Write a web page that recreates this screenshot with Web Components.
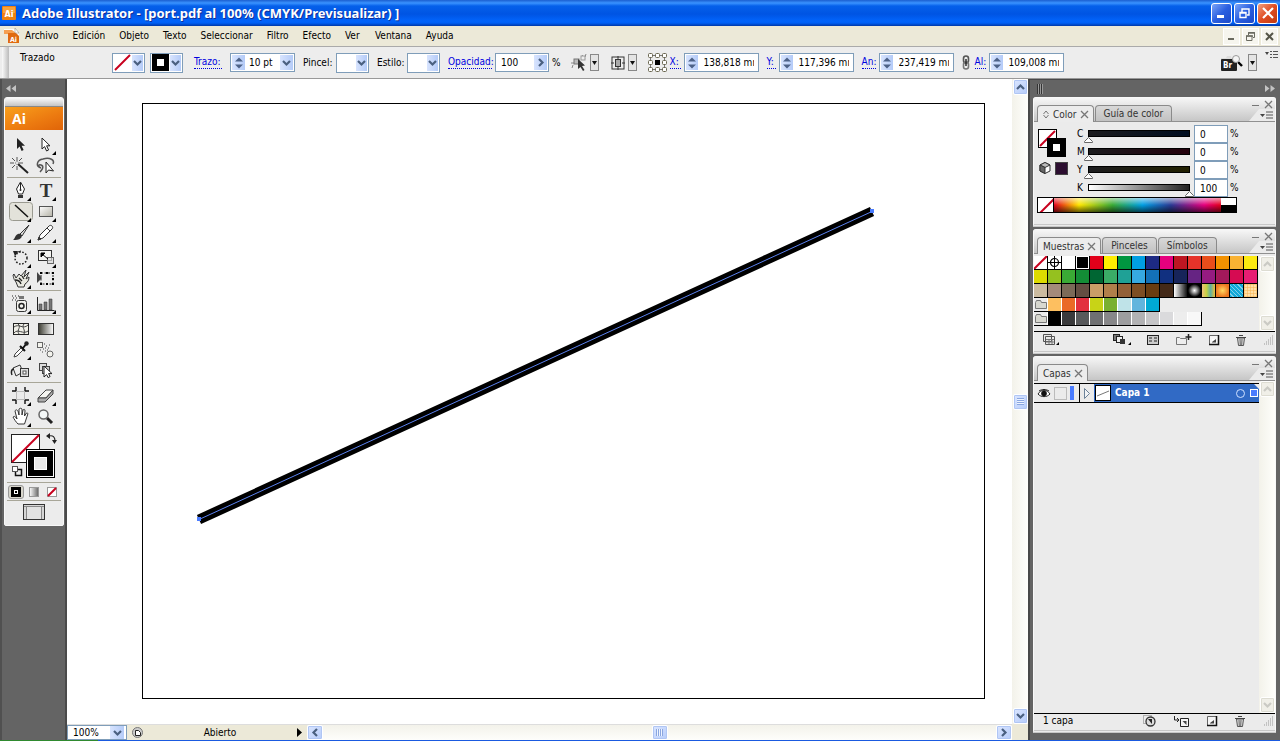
<!DOCTYPE html>
<html lang="es">
<head>
<meta charset="utf-8">
<title>Adobe Illustrator - [port.pdf]</title>
<style>
html,body{margin:0;height:100%}
body{font:10px/14px "DejaVu Sans Condensed","DejaVu Sans",sans-serif;color:#000;overflow:hidden;background:#646464}
</style>
</head>
<body>
<ai-app></ai-app>
<script>
const BASE = `*{box-sizing:border-box}
button,input{font:inherit;color:inherit;margin:0;padding:0;border:0;background:none;outline:0;border-radius:0;min-width:0}
button{display:flex;align-items:center;justify-content:center}
svg{display:block;overflow:visible}`;
function define(name, css, html, after) {
  const t = document.createElement('template');
  customElements.define(name, class extends HTMLElement {
    connectedCallback() {
      if (this.shadowRoot) return;
      t.innerHTML = `<style>${BASE}${css}</style>${typeof html === 'function' ? html(this) : html}`;
      this.attachShadow({mode: 'open'}).append(t.content.cloneNode(true));
      if (after) after(this);
    }
  });
}

/* Icons: name -> [width, height, markup] */
const corner = '<path d="M23 17v4h-4z" fill="#000"/>';
const arrow = 'M0 0v11l2.600-2.400 2 4.400 2-1-2-4.200h3.400z';
const ICONS = {
  ai: [14,14,'<rect width="14" height="14" rx="1" fill="#f08010"/><rect x="1" y="1" width="12" height="6" fill="#f9a23c"/><text x="7" y="11" text-anchor="middle" font-size="9" font-weight="bold" fill="#fff">Ai</text>'],
  aidoc: [16,16,'<path d="M0 1h10l5 5v9H4V6H0z" fill="#fff"/><path d="M0 2h8l4 3v3H4V6H0z" fill="#f5a050"/><path d="M4 5h8l3 3v7H4z" fill="#e06a10"/><path d="M11 0l4 5h-4z" fill="#fff" stroke="#888" stroke-width=".5"/><text x="9.500" y="13.500" text-anchor="middle" font-size="7" font-weight="bold" fill="#fff">Ai</text>'],
  chev: [7,6,'<path d="M0 1l3.500 3.500L7 1" fill="none" stroke="#4a6080" stroke-width="2.200"/>'],
  chevup: [7,6,'<path d="M0 5l3.500-3.500L7 5" fill="none" stroke="#4a6080" stroke-width="2.200"/>'],
  chevr: [6,7,'<path d="M1 0l3.500 3.500L1 7" fill="none" stroke="#4a6080" stroke-width="2.200"/>'],
  chevl: [6,7,'<path d="M5 0L1.500 3.500 5 7" fill="none" stroke="#4a6080" stroke-width="2.200"/>'],
  spin: [8,12,'<path d="M0 4.500L4 .5l4 4zM0 7.500l4 4 4-4z" fill="#4d6288"/>'],
  tri: [5,4,'<path d="M0 0h5L2.500 4z" fill="#111"/>'],
  none: [17,17,'<rect width="17" height="17" fill="#fff"/><path d="M1 16L16 1" stroke="#c8001e" stroke-width="2"/>'],
  strokesw: [17,17,'<rect width="17" height="17" fill="#000"/><rect x="5" y="5" width="7" height="7" fill="#fff"/>'],
  wmin: [10,10,'<rect x="0" y="7" width="7" height="3" fill="#fff"/>'],
  wres: [11,11,'<path d="M3 4V1h7v6H8M1 4.500h6v5H1z M1 5h6" fill="none" stroke="#fff" stroke-width="1.400"/>'],
  wclose: [10,10,'<path d="M0 0l10 10M10 0L0 10" stroke="#fff" stroke-width="2.200"/>'],
  dmin: [9,9,'<rect x="1" y="6" width="6" height="2" fill="#6b6b60"/>'],
  dres: [9,9,'<path d="M2.500 3V.5h6v5H7M.5 4h5.500v4.500H.5z" fill="none" stroke="#6b6b60"/><path d="M2 1h7M0 4h7" stroke="#6b6b60" stroke-width="1.500"/>'],
  dclose: [9,9,'<path d="M1 1l7 7M8 1L1 8" stroke="#555548" stroke-width="2"/>'],
  similar: [17,17,'<path d="M0 9h4M11 1l3 4M15 0l-1 3M2 11l-1 3" stroke="#888"/><rect x="3" y="5" width="5" height="5" fill="#bbb" stroke="#777"/><rect x="10" y="2" width="4" height="4" fill="#eee" stroke="#999"/><path d="M7 5v10l2.500-2 2.500 4 1.500-1-2.500-4 3-.5z" fill="#333"/>'],
  align: [14,14,'<rect x="1" y="1" width="12" height="12" fill="none" stroke="#333"/><path d="M0 7h3M11 7h3M7 0v3M7 11v3" stroke="#333"/><rect x="4.500" y="3.500" width="5" height="7" fill="#aaa" stroke="#333"/>'],
  refpt: [19,19,(()=>{let s='<path d="M2.500 2.500h14v14h-14z" fill="none" stroke="#777"/><rect x="7" y="7" width="5" height="5" fill="#000"/>';for(const y of[0,7,14])for(const x of[0,7,14])if(x!==7||y!==7)s+=`<rect x="${x+.5}" y="${y+.5}" width="4" height="4" rx="1" fill="#fff" stroke="#6a6650"/>`;return s})()],
  link: [8,15,'<rect x="1.500" y="1" width="5" height="7" rx="2.500" fill="none" stroke="#555" stroke-width="1.600"/><rect x="1.500" y="7" width="5" height="7" rx="2.500" fill="none" stroke="#777" stroke-width="1.600"/><path d="M4 4v7" stroke="#222" stroke-width="1.400"/>'],
  bridge: [22,16,'<path d="M0 3h5l1-2h4l1 3h4v11H0z" fill="#ddd"/><rect y="4" width="16" height="12" rx="1" fill="#222"/><text x="2" y="13" font-size="8" font-weight="bold" fill="#fff">Br</text><path d="M17 7l4 4" stroke="#000" stroke-width="2.400"/><circle cx="15" cy="4" r="3.500" fill="#f4f4f4" stroke="#999"/>'],
  pmenu: [13,9,'<path d="M0 3h5L2.500 6z" fill="#444"/><path d="M6 1h7M6 4h7M6 7h7" stroke="#555"/>'],
  cmenu: [13,9,'<path d="M0 2h4L2 5z" fill="#444"/><path d="M8 1.500h5M8 4.500h5M8 7.500h5" stroke="#555"/><path d="M5 1.500h2M5 4.500h2M5 7.500h2" stroke="#555"/>'],
  ff: [10,7,'<path d="M0 0l4.500 3.500L0 7zM5.500 0L10 3.500 5.500 7z" fill="#c4c4c4"/>'],
  rw: [10,7,'<path d="M4.500 0L0 3.500 4.500 7zM10 0L5.500 3.500 10 7z" fill="#c4c4c4"/>'],
  x: [7,7,'<path d="M0 0l7 7M7 0L0 7" stroke="#777" stroke-width="1.300"/>'],
  dash: [7,7,'<path d="M0 4.500h7" stroke="#777"/>'],
  updown: [6,9,'<path d="M.5 4L3 1l2.500 3M.5 5L3 8l2.500-3" fill="none" stroke="#777"/>'],
  t_sel: [25,21,`<path d="${arrow}" transform="translate(9 4)" fill="#222"/>`],
  t_dir: [25,21,`<path d="${arrow}" transform="translate(9 4)" fill="#fff" stroke="#222"/>${corner}`],
  t_wand: [25,21,'<path d="M10 9l10 9" stroke="#222" stroke-width="2"/><path d="M9 2v4M9 11v4M2 8h4M11 8h4M4 3l3 3M14 3l-3 3M4 13l3-3" stroke="#555"/><circle cx="9" cy="8" r="1.500" fill="#fff" stroke="#555" stroke-width=".5"/>'],
  t_lasso: [25,21,'<path d="M8 13C2 11 4 5 10 4c7-2 12 1 10 5M8 13c-3-1-3-4 0-3s2 4-1 7" fill="none" stroke="#555" stroke-width="1.500"/><path d="M13 7v11l2.500-3 5 1z" fill="#fff" stroke="#222"/>'],
  t_pen: [25,21,'<path d="M12.500 2l4 7-2 5h-4l-2-5z" fill="#fff" stroke="#222"/><path d="M12.500 3v6" stroke="#222"/><circle cx="12.500" cy="10" r="1" fill="#222"/><rect x="10" y="15" width="5" height="3" fill="#333"/>'+corner],
  t_type: [25,21,'<text x="13" y="17" text-anchor="middle" font-family="Liberation Serif,serif" font-weight="bold" font-size="19" fill="#333">T</text>'+corner],
  t_line: [25,21,'<rect x="1.500" y="1.500" width="23" height="18" rx="3" fill="#e3e2da" stroke="#9a9a90"/><path d="M7 4l13 12" stroke="#111" stroke-width="1.500"/>'+corner],
  t_rect: [25,21,'<defs><linearGradient id="rg" x2="1" y2="1"><stop offset="0" stop-color="#fff"/><stop offset="1" stop-color="#b4b2a6"/></linearGradient></defs><rect x="6.500" y="5.500" width="13" height="10" fill="url(#rg)" stroke="#555"/>'+corner],
  t_brush: [25,21,'<path d="M21 3l-9 9 2 2z" fill="#ddd" stroke="#333"/><path d="M5 18c2-1 2-5 5-6 3-1 5 2 3 4-2 2-5 2-8 2z" fill="#333"/>'+corner],
  t_pencil: [25,21,'<path d="M5 18l2-5 9-9c2-2 5 1 3 3l-9 9z" fill="#fff" stroke="#333"/><path d="M5 18l1-3 2 2zM14 6l3 3" stroke="#333" fill="#333"/>'+corner],
  t_rot: [25,21,'<circle cx="13" cy="11" r="6" fill="none" stroke="#222" stroke-width="1.500" stroke-dasharray="1.600 1.600"/><path d="M7 8a7 7 0 0 1 6-4" fill="none" stroke="#222"/><path d="M5 4h5L7 9z" fill="#222"/>'+corner],
  t_scale: [25,21,'<rect x="5.500" y="3.500" width="13" height="10" fill="#f4f4f0" stroke="#333"/><rect x="14.500" y="10.500" width="6" height="6" fill="#ddd" fill-opacity=".7" stroke="#666"/><path d="M8 6h4l-4 4zM9 7l6 5" fill="#000" stroke="#000"/>'+corner],
  t_warp: [25,21,'<path d="M5 7c1 5 1 4 3 7l2 5h6l1-3c3-2 4-4 4-7l-3 2 3-7-5 5 2-7-5 6-2-2-3 4-2-4z" fill="#e8e8e0" stroke="#333"/><path d="M7 12c3 0 5 1 6 4M11 10l3 3M14 8l2 3" fill="none" stroke="#222" stroke-width="1.300"/>'+corner],
  t_free: [25,21,'<rect x="8" y="5" width="12" height="11" fill="none" stroke="#222" stroke-dasharray="2 1.500"/><path d="M4 4v11l5-5z" fill="#444"/><path d="M7 4h2v2H7zM19 4h2v2h-2zM19 15h2v2h-2zM7 15h2v2H7zM13 4h2v2h-2zM13 15h2v2h-2zM19 10h2v2h-2z" fill="#000"/>'],
  t_spray: [25,21,'<path d="M4 3h1M7 3h1M10 3h1M5 5h1M8 5h1M4 7h1M7 7h1" stroke="#222"/><rect x="11" y="3" width="5" height="3" fill="#777"/><rect x="8.500" y="7.500" width="10" height="11" rx="2" fill="#f2f2ee" stroke="#333"/><circle cx="13.500" cy="13" r="2.500" fill="none" stroke="#222" stroke-width="1.500"/>'+corner],
  t_graph: [25,21,'<path d="M4.500 4v13.500h17" fill="none" stroke="#222"/><path d="M6 11h3v6H6zM11 9h3v8h-3zM16 6h3v11h-3z" fill="#777" stroke="#333" stroke-width=".5"/>'+corner],
  t_mesh: [25,21,'<rect x="5.500" y="5.500" width="15" height="11" fill="#f1f0e8" stroke="#222"/><path d="M6 9c5-4 9 3 14-2M6 15c4-5 9 2 14-2M10 6c4 3-2 6 1 10M16 6c-3 3 2 6 0 10" fill="none" stroke="#444"/>'],
  t_grad: [25,21,'<defs><linearGradient id="tg"><stop offset="0" stop-color="#3a3a30"/><stop offset="1" stop-color="#fff"/></linearGradient></defs><rect x="5.500" y="5.500" width="15" height="11" fill="url(#tg)" stroke="#333"/>'],
  t_eye: [25,21,'<path d="M6 18l1-3 7-7 2 2-7 7z" fill="#fff" stroke="#444"/><path d="M12 7l5 5M15 9l4-5" stroke="#111" stroke-width="2"/><circle cx="18.500" cy="4.500" r="2.200" fill="#222"/>'+corner],
  t_blend: [25,21,'<rect x="4.500" y="3.500" width="5" height="5" fill="#f4f4ee" stroke="#666"/><circle cx="17" cy="15" r="3" fill="#f4f4ee" stroke="#666"/><path d="M11 5h1M13 7h1M10 10h1M12 12h1M7 11h1M9 13h1M15 9h1M12 9h1M14 11h1M16 6h1" stroke="#444"/>'],
  t_bucket: [25,21,'<path d="M5 8l7-3 3 7-7 4z" fill="#eee" stroke="#333"/><path d="M6 9c-3 0-3 4-2 6" fill="none" stroke="#222" stroke-width="1.500"/><rect x="12.500" y="8.500" width="8" height="8" fill="#ddd" stroke="#333"/><rect x="15" y="11" width="3" height="3" fill="#fff" stroke="#555"/>'],
  t_live: [25,21,'<rect x="6.500" y="3.500" width="7" height="7" fill="#ddd" stroke="#444"/><rect x="9.500" y="6.500" width="7" height="7" fill="#ccc" stroke="#444"/><path d="M11 6v11l2.600-2.400 1.500 3 2-1-1.500-3h3.400z" fill="#fff" stroke="#222"/>'],
  t_slice: [25,21,'<path d="M8 2v4M17 2v4M8 15v4M17 15v4M4 6h4M17 6h4M4 15h4M17 15h4" stroke="#111" stroke-width="1.400"/><rect x="8.500" y="6.500" width="8" height="8" fill="none" stroke="#888" stroke-dasharray="1 1"/>'+corner],
  t_erase: [25,21,'<path d="M5 13l8-8h7l-7 8z" fill="#f4f4f0" stroke="#444"/><path d="M5 13v4h7l8-8V5l-7 8z" fill="#aaa" stroke="#444"/>'+corner],
  t_hand: [25,21,'<path d="M10 18c-2-2-4-5-5-7 1-1 2-1 4 2L7 5c1-2 2-1 3 0l1 4V3c1-1 2-1 3 0v6l1-5c1-1 2-1 2 1l-.5 5 2-3c1 0 2 0 1 2l-2 6-1 3z" fill="#fff" stroke="#333"/>'+corner],
  t_zoom: [25,21,'<path d="M14 12l5 5" stroke="#222" stroke-width="3"/><circle cx="10.500" cy="8.500" r="4.500" fill="#f4f8f8" stroke="#666" stroke-width="1.500"/>'],
  swap: [11,11,'<path d="M3 3c4-1 6 1 6 5" fill="none" stroke="#222" stroke-width="1.200"/><path d="M0 3l4-3v6zM6 7h5L8.500 11z" fill="#222"/>'],
  deflt: [10,10,'<rect x="3.500" y="3.500" width="6" height="6" fill="none" stroke="#111" stroke-width="1.500"/><rect x=".5" y=".5" width="5" height="5" fill="#fff" stroke="#555"/>'],
  m_color: [10,10,'<rect width="10" height="10" fill="#000"/><rect x="3.500" y="3.500" width="3" height="3" fill="none" stroke="#fff"/>'],
  m_grad: [10,10,'<defs><linearGradient id="mg"><stop offset="0" stop-color="#fff"/><stop offset="1" stop-color="#666"/></linearGradient></defs><rect x=".5" y=".5" width="9" height="9" fill="url(#mg)" stroke="#999"/>'],
  m_none: [10,10,'<rect x=".5" y=".5" width="9" height="9" fill="#fff" stroke="#999"/><path d="M1 9l8-8" stroke="#c8001e" stroke-width="2"/>'],
  screen: [22,16,'<rect x=".5" y=".5" width="21" height="15" fill="#d6d6d6" stroke="#333"/><path d="M1 2.500h20M3.500 3v12M18.500 3v12" stroke="#888"/><rect x="4" y="3" width="14" height="12" fill="#e2e2e2"/>'],
  cube: [12,12,'<path d="M6 .5L11 3v6l-5 2.500L1 9V3z" fill="#fff" stroke="#333"/><path d="M6 .5L11 3 6 5.500 1 3z" fill="#bbb" stroke="#333"/><path d="M1 3l5 2.500v6L1 9z" fill="#666" stroke="#333"/>'],
  folder: [12,11,'<path d="M.5 3.500l1-2h4l1 2h5v6H.5z" fill="#d8d8d0" stroke="#777"/>'],
  reg: [13,13,'<rect width="13" height="13" fill="#fff"/><circle cx="6.500" cy="6.500" r="4" fill="none" stroke="#000" stroke-width="1.200"/><path d="M0 6.500h13M6.500 0v13" stroke="#000"/>'],
  s_lib: [16,14,'<path d="M1.500 1.500h8v7h-8zM3.500 3.500h9v8h-9z" fill="#e8e8e8" stroke="#555"/><path d="M4 6.500h8M4 9h8M7 6v5M10 6v5" stroke="#777"/><path d="M17 9v3h-3z"/>'],
  s_kind: [17,14,'<rect x=".5" y="1.500" width="6" height="6" fill="#777" stroke="#222"/><rect x="3.500" y="3.500" width="6" height="6" fill="#eee" stroke="#222"/><rect x="7" y="6" width="5" height="5" fill="#333"/><path d="M18 9v3h-3z"/>'],
  s_opt: [12,10,'<rect x=".5" y=".5" width="11" height="9" fill="#ccc" stroke="#222"/><path d="M2 3h3M7 3h3M2 6h3M7 6h3" stroke="#222"/>'],
  s_fold: [16,12,'<path d="M.5 3.500h3l1 1h6v6H.5z" fill="#eee" stroke="#777"/><path d="M12.500 0v6M9.500 3h6" stroke="#222" stroke-width="1.500"/>'],
  s_new: [10,10,'<path d="M.5 .5h9v9h-9z" fill="#f4f4f4" stroke="#666"/><path d="M9.500 0v9.500H0" fill="none" stroke="#111" stroke-width="1.500"/><path d="M3 4v3.500h4V4z" fill="#444"/><path d="M3 4h4L3 7z" fill="#fff"/>'],
  s_del: [10,12,'<path d="M1.500 4h7l-1 7.500h-5z" fill="#ddd" stroke="#555"/><path d="M4 5l.3 6M6 5l-.3 6" stroke="#666"/><path d="M0 3.500h10M3 1.500h4" stroke="#444"/>'],
  l_mask: [13,12,'<rect x=".5" y=".5" width="8" height="8" fill="none" stroke="#777" stroke-dasharray="1 1"/><circle cx="7.500" cy="6.500" r="4.500" fill="#ddd" stroke="#333" stroke-width="1.300"/><path d="M5 4h4v5z" fill="#222"/>'],
  l_sub: [15,11,'<path d="M.5 0v4H4M3 2l2 2-2 2" fill="none" stroke="#222"/><path d="M6.500 2.500h8v8h-8z" fill="#f4f4f4" stroke="#222"/><path d="M8.500 5h4v4z" fill="#444"/>'],
  eye: [12,9,'<path d="M0 5C3 0 9 0 12 5 9 8.500 3 8.500 0 5z" fill="#fff" stroke="#222"/><circle cx="6" cy="4.500" r="2.800" fill="#111"/><path d="M1 2c3-2 7-2 10 0" fill="none" stroke="#222"/>'],
  expand: [6,11,'<path d="M.5 .5L5.500 5.500l-5 5z" fill="#f2f4f6" stroke="#6b8299"/>'],
  thumb: [14,14,'<rect width="14" height="14" fill="#fff"/><path d="M1 10l12-5" stroke="#777"/>'],
  grip: [10,10,'<path d="M9 1h1M7 3h1M9 3h1M5 5h1M7 5h1M9 5h1M3 7h1M5 7h1M7 7h1M9 7h1M1 9h1M3 9h1M5 9h1M7 9h1M9 9h1" stroke="#999"/>'],
  play: [5,9,'<path d="M0 0l5 4.500L0 9z"/>'],
  file: [11,11,'<circle cx="5.500" cy="5.500" r="5" fill="#ccc" stroke="#777"/><path d="M3.500 3.500h3l2 2v3h-5z" fill="#fff" stroke="#222"/>']
};
define('ai-icon', ':host{display:block;flex:none}', el => {
  const [w,h,m] = ICONS[el.getAttribute('name')];
  return `<svg width="${w}" height="${h}" viewBox="0 0 ${w} ${h}" aria-hidden="true">${m}</svg>`;
});
const ic = n => `<ai-icon name="${n}"></ai-icon>`;

define('title-bar', `:host{display:flex;align-items:center;height:26px;padding:0 2px;gap:6px;background:linear-gradient(#1b5fd0,#3a93ff 3px,#0560ea 6px,#0054e3 14px,#0264fb 21px,#0060f5 23px,#0038a8)}
h1{flex:1;margin:0;font:bold 13px/18px "Noto Sans",sans-serif;color:#fff;text-shadow:1px 1px #10309a;white-space:nowrap}
button{width:21px;height:21px;border:1px solid #fff;border-radius:3px;background:linear-gradient(135deg,#7aa5f8,#2a5fe0 50%,#1c49c8)}
.w{display:flex;gap:2px}.c{background:linear-gradient(135deg,#f0a080,#e04c22 50%,#c03a10)}`,
`${ic('ai')}<h1>Adobe Illustrator - [port.pdf al 100% (CMYK/Previsualizar) ]</h1>
<div class="w"><button aria-label="Minimizar">${ic('wmin')}</button><button aria-label="Restaurar">${ic('wres')}</button><button class="c" aria-label="Cerrar">${ic('wclose')}</button></div>`);

define('menu-bar', `:host{display:flex;align-items:center;height:20px;padding:0 2px 0 4px;background:#ece9d8}
nav{flex:1;display:flex;gap:12px;padding-left:5px}nav button{min-width:18px;line-height:18px;white-space:nowrap;padding-right:2px;justify-content:flex-start}
.w{display:flex;gap:2px}.w button{width:17px;height:17px;background:#f6f5ee;border:1px solid #fff}`,
`${ic('aidoc')}<nav>${['Archivo','Edición','Objeto','Texto','Seleccionar','Filtro','Efecto','Ver','Ventana','Ayuda'].map(t=>`<button>${t}</button>`).join('')}</nav>
<div class="w"><button aria-label="Minimizar documento">${ic('dmin')}</button><button aria-label="Restaurar documento">${ic('dres')}</button><button aria-label="Cerrar documento">${ic('dclose')}</button></div>`);

define('drop-box', `:host{display:flex;align-items:center;height:20px;border:1px solid #7f9db9;background:#fff}
button{width:11px;height:16px;margin-right:1px;background:linear-gradient(90deg,#d8e4fe,#b4cbf8)}
.swatch{flex:1;display:flex;justify-content:center}`,
el => `<span class="swatch"><slot></slot></span><button aria-label="Abrir">${ic('chev')}</button>`);

define('number-field', `:host{display:flex;align-items:center;gap:3px}
label{color:#0000e0;border-bottom:1px dotted #0000e0;line-height:12px;white-space:nowrap;width:var(--lw,auto)}
.box{display:flex;align-items:center;height:19px;width:75px;border:1px solid #7f9db9;background:#fff;padding:1px}
.sp{width:12px;height:15px;background:linear-gradient(90deg,#d8e4fe,#b4cbf8)}
input{width:50px;margin-left:6px;height:14px}`,
el => `<label for="n">${el.getAttribute('label')}</label><span class="box"><button class="sp" aria-label="Ajustar">${ic('spin')}</button><input id="n" value="${el.getAttribute('value')}"></span>`);

define('control-bar', `:host{display:flex;align-items:center;gap:8px;height:33px;border-top:1px solid #aaa;border-bottom:1px solid #999;background:#ededed;padding:0 2px;white-space:nowrap}
.grip{width:7px;height:31px;background:linear-gradient(90deg,#fafafa,#bbb);margin-right:3px}
.kind{width:84px;align-self:flex-start;padding-top:4px}
.g{display:flex;align-items:center;gap:3px}.five{gap:5px}
label.l{color:#0000e0;border-bottom:1px dotted #0000e0;line-height:12px}
drop-box{width:33px}
.trazo{padding-left:3px}.trazo label{width:28px;margin-right:5px}
.box{display:flex;align-items:center;justify-content:space-between;height:19px;width:65px;border:1px solid #7f9db9;background:#fff;padding:1px}
.box button{height:15px;width:13px;background:linear-gradient(90deg,#d8e4fe,#b4cbf8)}
.box input{width:27px;height:14px}.op .box{width:54px;padding-left:5px}
.dd{width:9px;height:17px;border:1px solid #888;background:#e4e4e4}
.ib{padding-left:3px;gap:2px}.ib .i{width:16px}
.p{width:30px}.e{width:27px}.o{width:44px}
.sp{flex:1}.m{align-self:flex-start;margin-top:3px}`,
`<div class="grip"></div><span class="kind">Trazado</span>
<div class="g five"><drop-box>${ic('none')}</drop-box><drop-box>${ic('strokesw')}</drop-box></div>
<div class="g trazo"><label class="l" for="tr">Trazo:</label><span class="box"><button aria-label="Ajustar trazo">${ic('spin')}</button><input id="tr" value="10 pt"><button aria-label="Lista">${ic('chev')}</button></span></div>
<div class="g"><span class="p">Pincel:</span><drop-box></drop-box></div>
<div class="g"><span class="e">Estilo:</span><drop-box></drop-box></div>
<div class="g op"><label class="l o" for="op">Opacidad:</label><span class="box"><input id="op" value="100"><button aria-label="Abrir opacidad">${ic('chevr')}</button></span><span>%</span></div>
<div class="g ib"><button class="i" aria-label="Seleccionar similares">${ic('similar')}</button><button class="dd" aria-label="Opciones">${ic('tri')}</button></div>
<div class="g ib"><button class="i" aria-label="Alinear">${ic('align')}</button><button class="dd" aria-label="Opciones">${ic('tri')}</button></div>
<div class="g ib">${ic('refpt')}<number-field label="X:" value="138,818 mm" style="--lw:11px;padding-left:1px"></number-field></div>
<number-field label="Y:" value="117,396 mm" style="--lw:9px"></number-field>
<number-field label="An:" value="237,419 mm" style="--lw:14px"></number-field>
<div class="g">${ic('link')}<number-field label="Al:" value="109,008 mm" style="--lw:11px;padding-left:2px"></number-field></div>
<span class="sp"></span>
<div class="g five"><button aria-label="Bridge">${ic('bridge')}</button><button class="dd" aria-label="Opciones">${ic('tri')}</button></div>
<button class="m" aria-label="Menú">${ic('cmenu')}</button>`);

const GROUPS = [['sel','dir','wand','lasso'],['pen','type','line','rect','brush','pencil'],['rot','scale','warp','free'],['spray','graph'],['mesh','grad','eye','blend','bucket','live'],['slice','erase','hand','zoom']];
define('tool-panel', `:host{display:block;width:67px;flex:none;background:#646464;border-right:2px solid #4a4a4a;border-left:2px solid #505050;padding:5px 1px 0 2px}
.rw{width:10px;margin:0 0 5px 2px;display:block;height:8px}
.panel{background:#ececec;border:1px solid #f8f8f8;border-radius:3px 3px 2px 2px;width:60px;padding-bottom:2px}
.bar{height:9px;background:linear-gradient(#fafafa,#c4c4c4);border-bottom:1px solid #888;border-radius:3px 3px 0 0}
.logo{height:23px;background:linear-gradient(160deg,#f9a01c,#ec7a10 60%,#e06408);color:#fff;font:bold 14px/23px "Open Sans",sans-serif;padding-left:7px}
.g{display:grid;grid-template-columns:25px 25px;grid-auto-rows:21px;margin:0 2px;padding:2px 0 1px 1px;border-bottom:1px solid #a8a698}
.first{padding-top:4px}
.g button{width:25px;height:21px}
.fs{height:54px;margin:0 2px;border-bottom:1px solid #a8a698;position:relative}
.fill,.stroke{position:absolute;width:29px;height:29px;background:#fff;border:1px solid #222}
.fill{left:4px;top:5px}.stroke{left:19px;top:20px;background:#000;border:1px solid #000;display:grid;place-items:center;outline:1px solid #fff;outline-offset:-2px}
.stroke i{width:13px;height:13px;background:#e8e8e8;border:1px solid #fff}
.sw{position:absolute;left:39px;top:4px}.df{position:absolute;left:5px;top:37px}
.modes{display:flex;justify-content:space-around;align-items:center;height:18px;margin:0 2px;border-bottom:1px solid #a8a698}
.modes button{width:16px;height:14px}.modes .on{border:1px solid #999;background:#d8d6cc;border-radius:3px}
.scr{width:100%;height:22px}`,
`<button class="rw" aria-label="Contraer">${ic('rw')}</button>
<div class="panel"><div class="bar"></div><div class="logo">Ai</div>
${GROUPS.map((g,i)=>`<div class="g ${i?'':'first'}">${g.map(t=>`<button aria-label="${t}">${ic('t_'+t)}</button>`).join('')}</div>`).join('')}
<div class="fs"><div class="fill"><svg width="27" height="27"><path d="M0 27L27 0" stroke="#c8001e" stroke-width="2"/></svg></div><button class="sw" aria-label="Intercambiar">${ic('swap')}</button><div class="stroke"><i></i></div><button class="df" aria-label="Por defecto">${ic('deflt')}</button></div>
<div class="modes"><button class="on" aria-label="Color">${ic('m_color')}</button><button aria-label="Degradado">${ic('m_grad')}</button><button aria-label="Ninguno">${ic('m_none')}</button></div>
<button class="scr" aria-label="Modo de pantalla">${ic('screen')}</button></div>`);

define('scroll-bar', `:host{display:flex;flex-direction:column;width:16px;background:linear-gradient(90deg,#f3f2ea,#fefefb);justify-content:space-between;align-items:center}
:host([horizontal]){flex-direction:row;width:auto;height:15px;background:linear-gradient(#f3f2ea,#fefefb)}
button{width:15px;height:16px;border:1px solid #fff;border-radius:2px;background:linear-gradient(135deg,#dbe6ff,#b6ccfa);box-shadow:inset 0 0 0 1px #b0c6f4}
:host([horizontal]) button{width:16px;height:15px}
:host([off]) button{background:#f0efe8;box-shadow:inset 0 0 0 1px #dddcd2}:host([off]) ai-icon{opacity:.25;filter:grayscale(1)}
.t i{width:7px;height:7px;background:repeating-linear-gradient(#8aa6e0 0 1px,#eef4ff 1px 2px)}
:host([horizontal]) .t i{background:repeating-linear-gradient(90deg,#8aa6e0 0 1px,#eef4ff 1px 2px)}`,
el => { const h = el.hasAttribute('horizontal');
 return `<button aria-label="Atrás">${ic(h?'chevl':'chevup')}</button>${el.hasAttribute('off')?'':'<button class="t" aria-label="Desplazar"><i></i></button>'}<button aria-label="Adelante">${ic(h?'chevr':'chev')}</button>`; });

define('doc-view', `:host{flex:1;min-width:0;display:grid;grid-template:minmax(0,1fr) 16px/minmax(0,1fr) 16px;background:#fff}
.page{padding:24px 27px 25px 75px;min-height:0;min-width:0}
.page svg{width:100%;height:100%}
.st{display:flex;align-items:center;background:#ece9d8;border-top:1px solid #ddd}
.z{display:flex;align-items:center;width:60px;height:15px;background:#fff;border:1px solid #7f9db9}
.z input{width:42px;padding-left:5px;height:13px}.z button{width:14px;height:13px;background:linear-gradient(90deg,#d8e4fe,#b4cbf8)}
.s{display:flex;align-items:center;width:180px;padding:0 5px}.s span{flex:1;text-align:center}
scroll-bar[horizontal]{flex:1}.c{background:#ece9d8}`,
`<div class="page"><svg viewBox="0 0 843 596" role="img" aria-label="Mesa de trabajo"><rect x=".5" y=".5" width="842" height="595" fill="#fff" stroke="#000"/><path d="M57 416.500L730 108.500" stroke="#000" stroke-width="10"/><path d="M57 416.500L730 108.500" stroke="#5b82f0"/><rect x="55" y="414" width="4" height="4" fill="#4a7cff"/><rect x="728" y="106" width="4" height="4" fill="#4a7cff"/></svg></div>
<scroll-bar></scroll-bar>
<div class="st"><span class="z"><input aria-label="Zoom" value="100%"><button aria-label="Lista de zoom">${ic('chev')}</button></span><div class="s">${ic('file')}<span>Abierto</span>${ic('play')}</div><scroll-bar horizontal></scroll-bar></div><div class="c"></div>`);

define('panel-tab', `:host{display:flex;align-items:center;gap:4px;height:16px;padding:0 8px;border:1px solid #8a8a8a;border-bottom:0;border-radius:4px 4px 0 0;background:linear-gradient(#d8d8d8,#c2c2c2);color:#333;line-height:15px;white-space:nowrap}
:host([on]){background:#ececec;height:17px;margin-bottom:-1px;padding:0 5px}
button{padding:0}`,
el => `${el.hasAttribute('sort')?ic('updown'):''}<slot></slot>${el.hasAttribute('on')?`<button aria-label="Cerrar">${ic('x')}</button>`:''}`);

define('dock-panel', `:host{display:flex;flex-direction:column;background:#ebebeb;border:1px solid #f8f8f8;border-radius:3px 3px 0 0;border-bottom:3px double #c8c8c8;margin:0 4px 2px 3px}
header{display:flex;height:24px;flex:none;background:linear-gradient(#f6f6f6,#c6c6c6);border-bottom:1px solid #909090;border-radius:3px 3px 0 0;padding-left:3px;align-items:flex-end}
.tabs{display:flex;gap:1px;flex:1}
.r{align-self:stretch;display:grid;grid-template-rows:11px 12px;justify-items:end}
.w{display:flex;gap:6px;padding:2px 3px 0 0}.m{width:26px;height:12px;background:#ebebeb;clip-path:polygon(0 100%,10px 0,100% 0,100% 100%);padding-left:8px}`,
`<header><div class="tabs"><slot name="tab"></slot></div><div class="r"><div class="w"><button aria-label="Minimizar panel">${ic('dash')}</button><button aria-label="Cerrar panel">${ic('x')}</button></div><button class="m" aria-label="Menú del panel">${ic('pmenu')}</button></div></header><slot></slot>`);

define('color-slider', `:host{display:grid;grid-template-columns:8px 102px 34px 10px;column-gap:3px;height:18px;align-items:center}
input[type=range]{appearance:none;width:110px;height:7px;margin:-1px 0 0 -4px;background:var(--g) center/100px 5px no-repeat,linear-gradient(#000,#000) center/102px 7px no-repeat;display:block}
input[type=range]::-webkit-slider-thumb{appearance:none;width:9px;height:6px;margin-top:12px;background:url('data:image/svg+xml,<svg xmlns="http://www.w3.org/2000/svg" width="9" height="6"><path d="M.5 5.500v-1L4.500 .5l4 4v1z" fill="white" stroke="%23666"/></svg>')}
input.v{height:18px;border:1px solid #7f9db9;background:#fff;padding-left:5px;width:34px;margin-left:1px}`,
el => { const v = el.getAttribute('value'), l = el.getAttribute('label');
 return `<label for="v">${l}</label><input type="range" min="0" max="100" value="${v}" aria-label="${l}"><input class="v" id="v" value="${v}"><span>%</span>`; });

define('color-panel', `:host{display:block;height:102px}
.top{display:grid;grid-template-columns:40px 1fr;padding:3px 0 0 3px}
.sw{position:relative;padding-top:34px;display:flex;gap:4px;align-items:flex-start}
.f,.s{position:absolute;width:19px;height:19px;border:1px solid #000}.f{left:1px;top:4px}.s{left:10px;top:13px}
.q{width:13px;height:13px;border:1px solid #444;background:#2c0e30;margin-top:3px}.sw>ai-icon{margin:3px 0 0 2px}
.ram{display:flex;width:200px;height:16px;margin:0 0 0 3px;border:1px solid #000}
.ram .n{width:16px;height:14px;overflow:hidden;border-right:1px solid #000}
.ram .h{flex:1;background:linear-gradient(rgba(255,255,255,.6),rgba(255,255,255,0) 50%,rgba(0,0,0,.6)),linear-gradient(90deg,#e2001a,#ffe600 15%,#3aaa35 35%,#009fe3 53%,#2a3a94 70%,#e6007e 90%,#e2001a)}
.ram .b{width:15px;background:linear-gradient(#fff 50%,#000 50%)}`,
`<div class="top"><div class="sw"><div class="f">${ic('none')}</div><div class="s">${ic('strokesw')}</div>${ic('cube')}<i class="q"></i></div>
<div>${[['C',0,'#1c1c1e,#000d20'],['M',0,'#1c1c1e,#24000c'],['Y',0,'#1c1c1e,#222000'],['K',100,'#fff,#222']].map(([l,v,g])=>`<color-slider label="${l}" value="${v}" style="--g:linear-gradient(90deg,${g})"></color-slider>`).join('')}</div></div>
<div class="ram"><span class="n">${ic('none')}</span><span class="h"></span><span class="b"></span></div>`);

const R = [
 ['none','reg','#fff','black','#e2001a','#ffed00','#009640','#009fe3','#1d2a83','#e6007e','#be1622','#e6332a','#e94e1b','#f39200','#f9b233','#fcea10'],
 ['#dedc00','#95c11f','#3aaa35','#138d36','#006633','#3aac66','#1fa196','#36a9e1','#1371b8','#113080','#17245a','#662483','#951b81','#a3195b','#d60b52','#e71d73'],
 ['#cbbba0','#a48a7b','#7b6a58','#634e42','#ca9e67','#b17f4a','#936037','#7d4e24','#683c11','#432918','linear-gradient(90deg,#fff,#111)','radial-gradient(#fff,#000 70%)','linear-gradient(90deg,#f0c080,#c8d040,#60b0a0,#f0c030)','radial-gradient(#ffd860,#ec7820 70%)','repeating-linear-gradient(45deg,#10a8d8 0 2px,#80d0e8 2px 3px)','repeating-linear-gradient(#f9b25080 0 1px,#fff0 1px 3px),repeating-linear-gradient(90deg,#f9b25080 0 1px,#fff0 1px 3px),#ffe0a8'],
 ['folder','#fdbf60','#ea6a27','#e2303f','#c8d317','#79b030','#bfe3e8','#62b5dd','#00a9d4'],
 ['folder','#000','#3a3a3c','#58595b','#6f7072','#878789','#9d9d9f','#b2b2b4','#c6c6c8','#dadadc','#ededed','#f8f8f8']];
define('swatches-panel', `:host{display:grid;grid-template-columns:1fr 16px;grid-template-rows:77px 20px}
.grid{padding-top:2px}
.row{display:flex;width:max-content;border-bottom:1px solid #000}
.row button{width:14px;height:13px;border-right:1px solid #000;overflow:hidden}
.row.g button{border-right-color:#fff}.row.g button:last-child{border-right-color:#000}
.k{background:#000;box-shadow:inset 0 0 0 1px #fff}
scroll-bar{margin-top:2px}
footer{grid-column:1/3;display:flex;align-items:center;gap:17px;padding:0 2px 3px 8px;border-top:1px solid #000}
footer span{flex:1}`,
`<div class="grid">${R.map((r,i)=>`<div class="row ${i>2?'g':''}">${r.map(c=>ICONS[c]?`<button aria-label="${c}">${ic(c)}</button>`:c==='black'?'<button class="k" aria-label="Negro"></button>':`<button aria-label="Muestra" style="background:${c}"></button>`).join('')}</div>`).join('')}</div>
<scroll-bar off></scroll-bar>
<footer>${ic('s_lib')}<span></span>${['s_kind','s_opt','s_fold','s_new','s_del','grip'].map(n=>`<button aria-label="${n}">${ic(n)}</button>`).join('')}</footer>`);

define('layers-panel', `:host{flex:1;display:grid;grid-template-columns:1fr 16px;grid-template-rows:1fr 17px;min-height:0}
.row{display:flex;align-items:stretch;height:20px;margin-top:2px;border-top:1px solid #000;border-bottom:1px solid #000}
.row>*{display:flex;align-items:center;justify-content:center}
.e{width:19px}.lk{width:13px;height:13px;border:1px solid #bbb;align-self:center;margin-left:1px}.c{width:4px;height:14px;background:#4a7cff;align-self:center;margin:0 5px 0 3px}
.x{width:15px;border-left:1px solid #000}
.n{flex:1;background:#316ac5;color:#fff;font-weight:bold;justify-content:flex-start;gap:4px;padding:0 1px;clip-path:polygon(0 0,calc(100% - 5px) 0,100% 5px,100% 100%,0 100%)}
.th{border:1px solid #000}.n span{flex:1}.n i{width:9px;height:9px;border:1px solid #cfe0ff;border-radius:5px}.n b{width:8px;height:8px;background:#4a7cff;border:1px solid #fff;margin-left:1px}
footer{grid-column:1/3;display:flex;align-items:center;gap:18px;padding:0 2px 2px 9px;border-top:1px solid #000}
footer span{flex:1}`,
`<div><div class="row"><button class="e" aria-label="Visibilidad">${ic('eye')}</button><button class="lk" aria-label="Bloquear"></button><span class="c"></span><button class="x" aria-label="Expandir">${ic('expand')}</button><div class="n"><div class="th">${ic('thumb')}</div><span>Capa 1</span><i></i><b></b></div></div></div>
<scroll-bar off></scroll-bar>
<footer><span>1 capa</span>${['l_mask','l_sub','s_new','s_del','grip'].map(n=>`<button aria-label="${n}">${ic(n)}</button>`).join('')}</footer>`);

define('panel-dock', `:host{display:flex;flex-direction:column;width:252px;flex:none;background:#646464;border-left:2px solid #484848;border-top:1px solid #484848}
:host>.h,.h{display:flex;justify-content:space-between;align-items:center;height:17px;padding:0 5px 0 7px}
.grip{width:6px;height:10px;background:repeating-linear-gradient(90deg,#333 0 1px,#999 1px 2px)}
.l{flex:1;min-height:0;margin-bottom:7px}`,
`<div class="h"><i class="grip"></i><button aria-label="Contraer">${ic('ff')}</button></div>
<dock-panel><panel-tab slot="tab" on sort>Color</panel-tab><panel-tab slot="tab">Guía de color</panel-tab><color-panel></color-panel></dock-panel>
<dock-panel><panel-tab slot="tab" on>Muestras</panel-tab><panel-tab slot="tab">Pinceles</panel-tab><panel-tab slot="tab">Símbolos</panel-tab><swatches-panel></swatches-panel></dock-panel>
<dock-panel class="l"><panel-tab slot="tab" on>Capas</panel-tab><layers-panel></layers-panel></dock-panel>`);

define('ai-app', `:host{display:flex;flex-direction:column;height:100vh;min-width:1200px}
main{flex:1;display:flex;min-height:0}
.task{height:1px;background:linear-gradient(90deg,#2f8a2f 98px,#1a5ae0 98px)}`,
`<title-bar></title-bar><menu-bar></menu-bar><control-bar></control-bar><main><tool-panel></tool-panel><doc-view></doc-view><panel-dock></panel-dock></main><div class="task"></div>`);
</script>
</body>
</html>
